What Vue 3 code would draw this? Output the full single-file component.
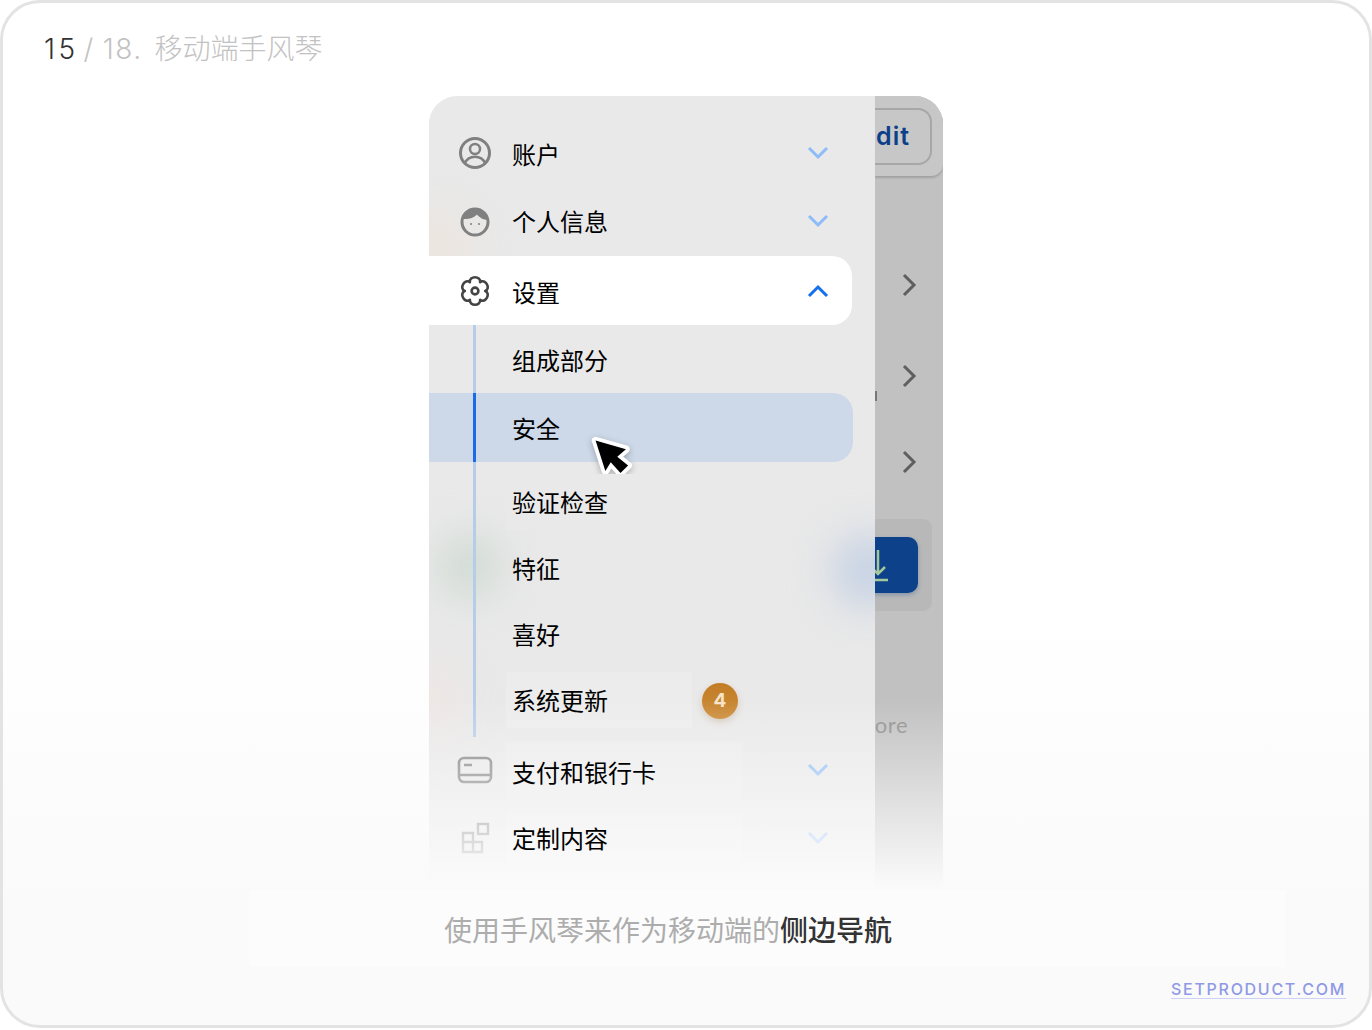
<template>
  <div class="frame">
    <header class="title">
      <span class="title-now">15</span>
      <span class="title-rest"> / 18.</span>
      <span class="title-name">移动端手风琴</span>
    </header>

    <main class="stage">
      <section class="phone">
        <nav class="menu">
          <i class="blob blob-warm"></i>
          <i class="blob blob-green"></i>
          <i class="blob blob-blue"></i>
          <i class="blob blob-pink"></i>

          <div v-for="row in topRows" :key="row.label" class="row" :class="{ open: row.open }">
            <span class="slot">
              <svg v-if="row.icon === 'account'" class="icon" viewBox="0 0 36 36" fill="none" stroke="currentColor">
                <circle cx="18" cy="18" r="14.5" stroke-width="3" />
                <circle cx="18" cy="14" r="5" stroke-width="2.5" />
                <path d="M7.5 28.5C10 23.5 14 21.8 18 21.8s8 1.7 10.5 6.7" stroke-width="2.5" />
              </svg>
              <svg v-else-if="row.icon === 'face'" class="icon" viewBox="0 0 36 36" fill="none" stroke="currentColor">
                <circle cx="18" cy="19" r="13" stroke-width="3" />
                <path d="M5.5 16C7 10 12 6 18 6s11.500 4 13 11c-5 0-9-3-11-5.500C17 15 11 16.500 5.500 16Z" fill="currentColor" stroke="none" />
                <circle cx="14" cy="21" r="1" fill="currentColor" stroke="none" />
                <circle cx="22" cy="21" r="1" fill="currentColor" stroke="none" />
              </svg>
              <svg v-else class="icon" viewBox="0 0 36 36" fill="none" stroke="currentColor">
                <path :d="gearPath" stroke-width="2.6" stroke-linejoin="round" />
                <circle cx="18" cy="18" r="3.400" stroke-width="2.600" />
              </svg>
            </span>
            <span class="label" :class="[row.patch, { lift: row.lift }]">{{ row.label }}</span>
            <svg class="chevron" viewBox="0 0 22 14" fill="none">
              <path :d="row.open ? 'M2 12 11 3l9 9' : 'M2 2l9 9 9-9'" />
            </svg>
          </div>

          <div class="sub">
            <i class="rail"></i>
            <div v-for="item in subRows" :key="item.label" class="row" :class="{ active: item.active }">
              <span class="slot"></span>
              <span class="label" :class="item.patch">{{ item.label }}</span>
              <span v-if="item.badge" class="badge">{{ item.badge }}</span>
              <svg v-if="item.active" class="cursor" viewBox="0 0 48 48">
                <path d="M7 7 35 15 27 22 37 30 30 37 21 27 16 35Z" fill="#000" stroke="#fff" stroke-width="7" stroke-linejoin="round" paint-order="stroke" />
              </svg>
            </div>
          </div>

          <div class="row">
            <span class="slot">
              <svg class="icon" viewBox="0 0 36 36" fill="none" stroke="currentColor" stroke-width="2.600">
                <rect x="2" y="6" width="32" height="24" rx="5" />
                <path d="M2 23h32M7 13h8" />
              </svg>
            </span>
            <span class="label patch-wide lift-more">支付和银行卡</span>
            <svg class="chevron" viewBox="0 0 22 14" fill="none"><path d="M2 2l9 9 9-9" /></svg>
          </div>
          <div class="row">
            <span class="slot">
              <svg class="icon" viewBox="0 0 36 36" fill="none" stroke="currentColor" stroke-width="2.400">
                <path d="M6 13h10v19H6zM6 22h19v10h-9" />
                <rect x="21" y="4" width="10" height="10" />
              </svg>
            </span>
            <span class="label patch-wide">定制内容</span>
            <svg class="chevron" viewBox="0 0 22 14" fill="none"><path d="M2 2l9 9 9-9" /></svg>
          </div>
        </nav>

        <aside class="peek">
          <div class="peek-head">
            <span class="edit">Edit</span>
          </div>
          <svg v-for="n in 3" :key="n" class="peek-arrow" :class="'peek-arrow-' + n" viewBox="0 0 16 26" fill="none">
            <path d="M3 3l10 10L3 23" />
          </svg>
          <i class="peek-tick"></i>
          <div class="peek-card">
            <span class="peek-btn">
              <svg width="24" height="34" viewBox="0 0 24 34" fill="none" stroke="#a5c79c" stroke-width="2.500">
                <path d="M12 2v24M5 19l7 7 7-7M2 32h20" />
              </svg>
            </span>
          </div>
          <span class="peek-more">Learn more</span>
        </aside>

        <i class="fade"></i>
      </section>
    </main>

    <p class="caption">使用手风琴来作为移动端的<b>侧边导航</b></p>

    <footer class="footer">
      <span class="brand">SETPRODUCT.COM</span>
    </footer>
  </div>
</template>

<script setup>
const topRows = [
  { label: '账户', icon: 'account', patch: 'patch-faint', lift: true },
  { label: '个人信息', icon: 'face', patch: 'patch-faint' },
  { label: '设置', icon: 'gear', open: true, lift: true }
]

const subRows = [
  { label: '组成部分' },
  { label: '安全', active: true },
  { label: '验证检查', patch: 'patch-solid' },
  { label: '特征', patch: 'patch-faint' },
  { label: '喜好', patch: 'patch-faint' },
  { label: '系统更新', patch: 'patch-short', badge: 4 }
]

// six rounded lobes, worked out instead of hand-typing the curve
const polar = (deg, r) => {
  const a = (deg * Math.PI) / 180
  return `${(18 + r * Math.cos(a)).toFixed(2)} ${(18 + r * Math.sin(a)).toFixed(2)}`
}
let gear = `M${polar(-120, 10.2)}`
for (let i = 0; i < 6; i++) {
  const mid = -90 + i * 60
  gear += `C${polar(mid - 22, 16.5)} ${polar(mid + 22, 16.5)} ${polar(mid + 30, 10.2)}`
}
const gearPath = gear + 'Z'
</script>

<style>
html,
body {
  background: #fff;
}
</style>

<style scoped>
.frame {
  box-sizing: border-box;
  width: 1372px;
  height: 1028px;
  border: 3px solid #e3e3e3;
  border-radius: 40px;
  background: linear-gradient(#fff 60%, #fafafa 88%);
  overflow: hidden;
  font-family: "Noto Sans CJK SC", "Noto Sans", sans-serif;
}

.title {
  box-sizing: border-box;
  display: flex;
  height: 93px;
  padding: 28px 0 0 41px;
  font: 300 28px/36px Inter, "Noto Sans CJK SC", sans-serif;
  white-space: pre;
}

.title-now {
  color: #333;
  letter-spacing: 3.5px;
}

.title-rest {
  margin-left: -3px;
  color: #c2c2c2;
  letter-spacing: 1.5px;
  word-spacing: -1.5px;
}

.title-name {
  margin-left: 12px;
  color: #c2c2c2;
}

.stage {
  display: flex;
  justify-content: center;
}

.phone {
  position: relative;
  display: flex;
  width: 514px;
  height: 794px;
  border-radius: 28px 28px 0 0;
  overflow: hidden;
}

.menu {
  position: relative;
  flex: none;
  box-sizing: border-box;
  width: 446px;
  padding: 24px 23px 0 0;
  background: #e9e9e9;
  overflow: hidden;
}

.blob {
  position: absolute;
  border-radius: 50%;
  filter: blur(22px);
}

.blob-warm {
  left: -30px;
  top: 120px;
  width: 70px;
  height: 60px;
  background: #ede4dc;
}

.blob-green {
  left: 10px;
  top: 440px;
  width: 60px;
  height: 60px;
  background: #ccd8d0;
}

.blob-blue {
  left: 405px;
  top: 440px;
  width: 70px;
  height: 70px;
  background: #c2cfe3;
}

.blob-pink {
  left: -30px;
  top: 570px;
  width: 60px;
  height: 70px;
  background: #efe6e4;
}

.row {
  position: relative;
  display: flex;
  align-items: center;
  height: 66px;
  margin-bottom: 2px;
  color: #808080;
}

.row.open {
  height: 69px;
  margin-bottom: 0;
  border-radius: 0 20px 20px 0;
  background: #fff;
  color: #444;
}

.slot {
  flex: none;
  box-sizing: border-box;
  width: 77px;
  padding-left: 28px;
}

.icon {
  display: block;
  width: 36px;
  height: 36px;
}

.label {
  position: relative;
  z-index: 2;
  box-sizing: border-box;
  flex: none;
  height: 56px;
  padding-left: 6px;
  color: #000;
  font-size: 24px;
  line-height: 56px;
  white-space: nowrap;
}

.label.lift {
  padding-top: 1px;
}

.label.lift-more {
  padding-top: 2px;
}

.patch-faint {
  width: 211px;
  background: rgba(255, 255, 255, 0.03);
}

.patch-solid {
  width: 211px;
  background: #e9e9e9;
}

.patch-short {
  width: 186px;
  background: rgba(255, 255, 255, 0.16);
}

.patch-wide {
  width: 236px;
  background: rgba(255, 255, 255, 0.14);
}

.chevron {
  flex: none;
  width: 22px;
  height: 14px;
  margin-left: auto;
  margin-right: 23px;
  stroke: #8dbcf8;
  stroke-width: 3;
}

.row.open .chevron {
  stroke: #1570ec;
}

.sub {
  position: relative;
  padding: 2px 0 4px;
}

.sub .row {
  margin-bottom: 0;
}

.rail {
  position: absolute;
  left: 44px;
  top: 0;
  bottom: 0;
  width: 3px;
  background: #b6cdea;
}

.sub .row.active {
  height: 69px;
  margin-right: -1px;
  margin-bottom: 7px;
  border-radius: 0 20px 20px 0;
  background: #cdd9e8;
}

.row.active::before {
  content: "";
  position: absolute;
  left: 44px;
  top: 0;
  bottom: 0;
  width: 3px;
  background: #1a6be8;
}

.cursor {
  position: absolute;
  left: 159px;
  top: 40px;
  width: 52px;
  height: 52px;
  filter: drop-shadow(0 2px 3px rgba(0, 0, 0, 0.25));
}

.badge {
  flex: none;
  width: 36px;
  height: 36px;
  margin: 2px 0 0 10px;
  border-radius: 50%;
  background: linear-gradient(#c27c24, #cc8d3a);
  box-shadow: 0 3px 6px rgba(160, 110, 50, 0.25);
  color: #f7e3c8;
  font: 700 19px/36px Inter, sans-serif;
  text-align: center;
}

.peek {
  position: relative;
  flex: 1;
  display: flex;
  flex-direction: column;
  align-items: flex-end;
  background: #c1c1c1;
  overflow: hidden;
}

.peek-head {
  flex: none;
  box-sizing: border-box;
  width: 100%;
  height: 80px;
  padding: 12px 11px 0 0;
  border-radius: 0 0 12px 0;
  background: #c7c7c7;
  box-shadow: 0 2px 2px #a2a2a2;
  display: flex;
  justify-content: flex-end;
}

.edit {
  flex: none;
  box-sizing: border-box;
  width: 110px;
  height: 57px;
  padding-right: 20px;
  border: 2px solid #a7a7a7;
  border-radius: 14px;
  color: #0c3f8a;
  font: 600 25px/53px Inter, sans-serif;
  letter-spacing: 1px;
  text-align: right;
}

.peek-arrow {
  flex: none;
  width: 16px;
  height: 26px;
  margin-right: 26px;
  stroke: #5f5f5f;
  stroke-width: 3;
}

.peek-arrow-1 {
  margin-top: 96px;
}

.peek-arrow-2 {
  margin-top: 65px;
}

.peek-arrow-3 {
  margin-top: 60px;
}

.peek-tick {
  position: absolute;
  left: 0;
  top: 295px;
  width: 2px;
  height: 10px;
  background: #777;
}

.peek-card {
  flex: none;
  box-sizing: border-box;
  display: flex;
  justify-content: flex-end;
  width: 130px;
  height: 92px;
  margin: 44px 11px 0 0;
  padding: 18px 14px;
  border-radius: 9px;
  background: #b8b8b8;
}

.peek-btn {
  display: flex;
  align-items: center;
  justify-content: center;
  flex: none;
  width: 80px;
  height: 56px;
  border-radius: 10px;
  background: #0d4189;
  box-shadow: 0 2px 4px rgba(13, 65, 137, 0.3);
}

.peek-more {
  flex: none;
  margin: 99px 35px 0 0;
  color: #8f8f8f;
  font: 400 22px/30px Lato, sans-serif;
  letter-spacing: 0.5px;
  white-space: nowrap;
}

.fade {
  position: absolute;
  inset: 0;
  z-index: 1;
  background: linear-gradient(rgba(251, 251, 251, 0) 76%, #fbfbfb 100%);
  pointer-events: none;
}

.caption {
  box-sizing: border-box;
  width: 1035px;
  height: 77px;
  margin: 0 0 0 247px;
  padding-left: 194px;
  background: #fcfcfc;
  color: #adadad;
  font-size: 28px;
  line-height: 79px;
  white-space: nowrap;
}

.caption b {
  color: #333;
  font-weight: 500;
}

.footer {
  display: flex;
  justify-content: flex-end;
  margin-top: 13px;
  padding-right: 23px;
}

.brand {
  border-bottom: 1px solid #ccd1f5;
  color: #8f99e6;
  font: 500 16px/18px Inter, sans-serif;
  letter-spacing: 1.7px;
}
</style>
